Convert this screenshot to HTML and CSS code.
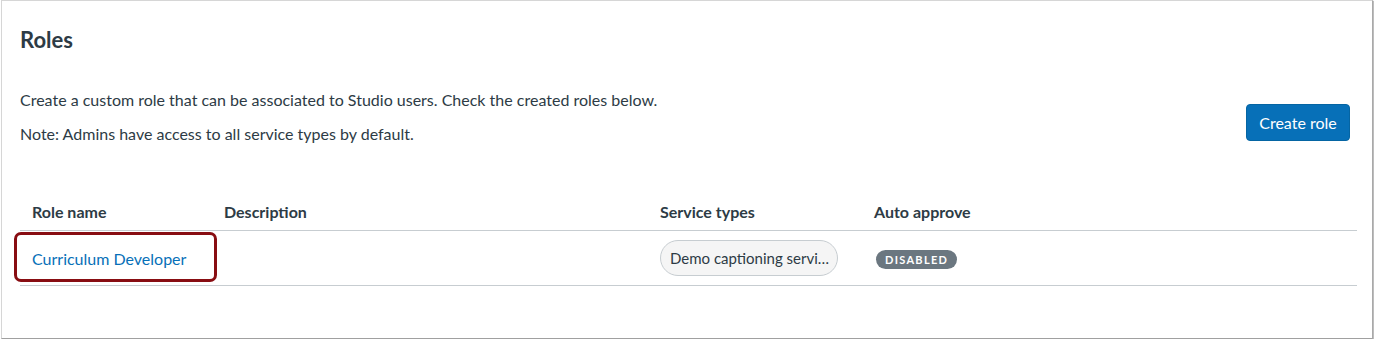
FILE: index.html
```html
<!DOCTYPE html>
<html>
<head>
<meta charset="utf-8">
<link rel="stylesheet" href="styles.css">
</head>
<body>
<div class="frame">
  <h1 class="title">Roles</h1>
  <div class="intro">
    <div class="intro-text">
      <p>Create a custom role that can be associated to Studio users. Check the created roles below.</p>
      <p>Note: Admins have access to all service types by default.</p>
    </div>
    <button class="btn">Create role</button>
  </div>
  <div class="table">
    <div class="row head">
      <div class="cell c1">Role name</div>
      <div class="cell c2">Description</div>
      <div class="cell c3">Service types</div>
      <div class="cell c4">Auto approve</div>
    </div>
    <div class="row body">
      <div class="cell c1 name-cell">
        <a class="link" href="#">Curriculum Developer</a>
        <span class="highlight"></span>
      </div>
      <div class="cell c2"></div>
      <div class="cell c3"><span class="pill">Demo captioning servi…</span></div>
      <div class="cell c4"><span class="badge">Disabled</span></div>
    </div>
  </div>
</div>
</body>
</html>
```
FILE: styles.css
```css
html, body {
  margin: 0;
  padding: 0;
  background: #ffffff;
}
body {
  font-family: Lato, "Open Sans", sans-serif;
  color: #2d3b45;
}
.frame {
  box-sizing: border-box;
  width: 1372px;
  height: 339px;
  margin-left: 1px;
  border: 1px solid #d6d6d6;
  border-right-color: #a9a9a9;
  border-bottom-color: #a0a0a0;
  box-shadow: 1px 1px 1px #bdbdbd;
  padding: 0 15px 0 18px;
  background: #fff;
}
.title {
  margin: 0;
  padding-top: 25px;
  font-size: 22px;
  line-height: 28px;
  font-weight: 700;
  color: #2d3b45;
}
.intro {
  display: flex;
  justify-content: space-between;
  align-items: flex-start;
  margin-top: 35px;
}
.intro-text p {
  margin: 0 0 12px 0;
  font-size: 16px;
  line-height: 22px;
}
.btn {
  margin-top: 15px;
  margin-right: 7px;
  width: 104px;
  height: 37px;
  border: 1px solid #0565a3;
  border-radius: 4px;
  background: #0770b8;
  color: #fff;
  font-family: Lato, "Open Sans", sans-serif;
  font-size: 16px;
  padding: 0;
}
.table {
  margin-top: 38px;
}
.row {
  display: flex;
  border-bottom: 1px solid #c7cdd1;
}
.row.head {
  box-sizing: border-box;
  height: 36px;
  padding-bottom: 2px;
  align-items: center;
  font-weight: 700;
  font-size: 16px;
}
.row.body {
  height: 54px;
  align-items: center;
  font-size: 16px;
}
.cell {
  box-sizing: border-box;
  padding: 0 12px;
}
.c1 { width: 192px; }
.c2 { width: 436px; }
.c3 { width: 214px; }
.c4 { flex: 1; }
.name-cell {
  position: relative;
  align-self: stretch;
  display: flex;
  align-items: center;
}
.link {
  color: #0770b8;
  text-decoration: none;
}
.highlight {
  position: absolute;
  left: -6px;
  top: 1px;
  width: 203px;
  height: 50px;
  box-sizing: border-box;
  border: 3px solid #880d12;
  border-radius: 7px;
}
.pill {
  display: inline-block;
  box-sizing: border-box;
  width: 178px;
  height: 36px;
  line-height: 34px;
  padding: 0 9px;
  border: 1px solid #c7cdd1;
  border-radius: 18px;
  background: #f5f5f5;
  font-size: 15px;
  white-space: nowrap;
  vertical-align: middle;
}
.badge {
  display: inline-block;
  margin-left: 2px;
  height: 19px;
  line-height: 19px;
  padding: 0 9px;
  border-radius: 10px;
  background: #6b7780;
  color: #fff;
  font-size: 11px;
  font-weight: 700;
  letter-spacing: 1.3px;
  text-transform: uppercase;
}
```
